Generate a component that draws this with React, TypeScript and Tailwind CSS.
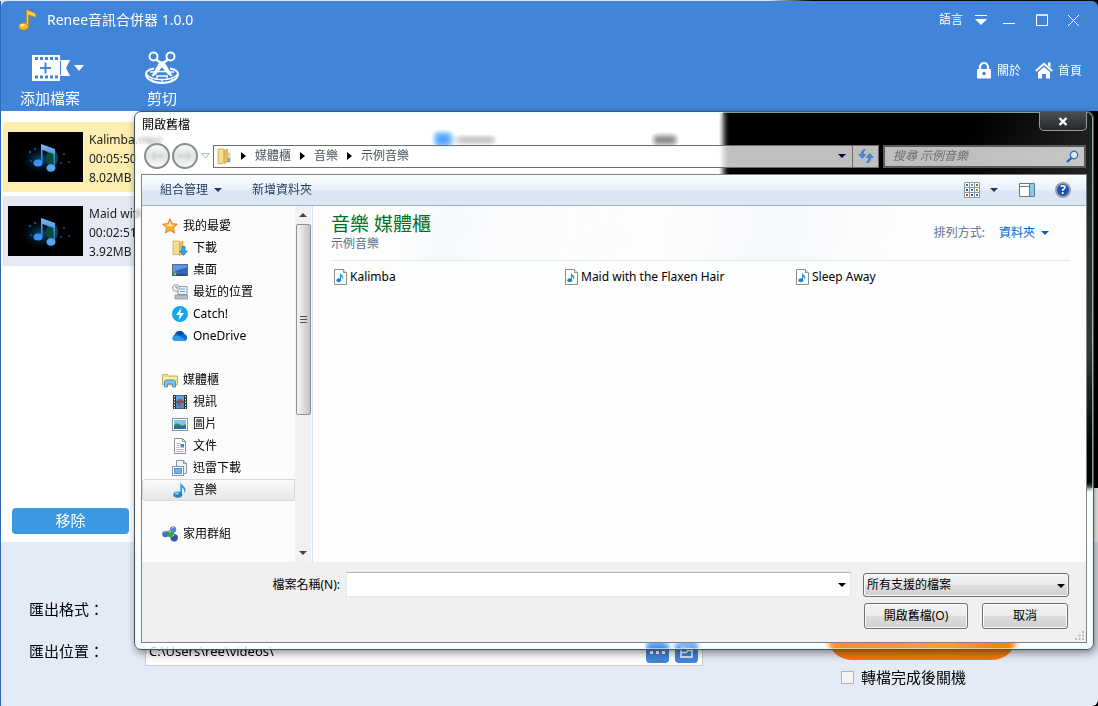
import React from 'react';

const APP_FONT = "font-['Noto_Sans','Noto_Sans_CJK_TC',sans-serif]";

/* ---------- small shared drawings ---------- */

const Caret: React.FC<{ className?: string }> = ({ className = '' }) => (
    <svg viewBox="0 0 8 4" className={`w-2 h-1 flex-none ${className}`} fill="currentColor">
        <path d="M0 0h8L4 4z" />
    </svg>
);

const RightCaret: React.FC = () => (
    <svg viewBox="0 0 5 8" className="w-[5px] h-2 flex-none text-black" fill="currentColor">
        <path d="M0 0v8l5-4z" />
    </svg>
);

const Icon: React.FC<{ children: React.ReactNode }> = ({ children }) => (
    <svg viewBox="0 0 16 16" className="w-4 h-4 flex-none">{children}</svg>
);

const StarIcon = () => (
    <Icon>
        <path d="M8 .8l2.1 4.9 5.3.5-4 3.5 1.2 5.3L8 12.3 3.4 15l1.2-5.3-4-3.5 5.3-.5z" fill="#ffb62e" stroke="#d9741a" strokeWidth=".9" />
        <path d="M8 3l1.3 3.6 3 .5L8 8.6 3.6 7l3-.4z" fill="#ffe9a0" />
    </Icon>
);

const DownloadsIcon = () => (
    <Icon>
        <path d="M1 1h6.500v13.500H1z" fill="#f3dc8c" stroke="#c9a545" strokeWidth=".7" />
        <path d="M7.500 2.500L11 1v13l-3.500 1.500z" fill="#e3c363" stroke="#c9a545" strokeWidth=".7" />
        <path d="M10 6.5h3V11h2.4l-3.9 4.5L7.7 11H10z" fill="#35a7ee" stroke="#1767ab" strokeWidth=".7" />
    </Icon>
);

const DesktopIcon = () => (
    <Icon>
        <rect x=".5" y="2.5" width="15" height="11" fill="#2f62c4" stroke="#5b6a80" />
        <path d="M1 3h14v3C9 6 5 8 1 11z" fill="#5e96e6" />
        <path d="M1 12h14v2H1z" fill="#3a4a60" />
        <circle cx="3" cy="12" r="1.4" fill="#6ed066" />
    </Icon>
);

const RecentIcon = () => (
    <Icon>
        <path d="M6 2.5h9v8H6z" fill="#eef4fa" stroke="#8a98a8" />
        <path d="M8 5h5M8 7.5h5" stroke="#5ba7dd" />
        <path d="M3 11h12.5v4H3z" fill="#b5bcc4" stroke="#8b939b" strokeWidth=".8" />
        <circle cx="4" cy="4" r="3.4" fill="#f3f6f8" stroke="#8d99a6" />
        <path d="M4 2v2h2" fill="none" stroke="#5c6b7a" strokeWidth=".8" />
    </Icon>
);

const CatchIcon = () => (
    <Icon>
        <circle cx="8" cy="8" r="8" fill="#15a6ee" />
        <path d="M9.4 1.8L4 9h3.6l-1 5.2L12 7H8.4z" fill="#fff" />
    </Icon>
);

const OneDriveIcon = () => (
    <Icon>
        <path d="M3.5 13A3.3 3.3 0 013 6.6 5 5 0 0112.3 6 3.6 3.6 0 0112.5 13z" fill="#0f6cc9" />
        <path d="M0 10.6C1 7.5 5 6.8 7 8l7 4.3c-.6.5-1.2.7-2 .7H3.3A3.2 3.2 0 010 10.6z" fill="#2b9df0" />
        <path d="M12.3 6A5 5 0 003 6.6C5 6 6 6.5 8 8z" fill="#0a4fa3" />
    </Icon>
);

const LibraryIcon = () => (
    <Icon>
        <path d="M.5 2.5h5l1 1.5h9v9H.5z" fill="#f4dc88" stroke="#c5a143" strokeWidth=".8" />
        <path d="M1 5.5h14v1.5H1z" fill="#fdf3c5" />
        <path d="M2.5 15V9.5l2-1.5h7l2 1.5V15h-3v-3h-5v3z" fill="#7cc2ea" stroke="#3a86bb" strokeWidth=".8" />
    </Icon>
);

const VideoIcon = () => (
    <Icon>
        <rect x="1" y="1" width="14" height="14" fill="#2a3238" />
        <rect x="4" y="1.5" width="8" height="6" fill="#58a9e4" />
        <rect x="4" y="8.5" width="8" height="6" fill="#4a8fd6" />
        <path d="M5 6l3-1.500 3 1.500v1.500H5z" fill="#a8543a" />
        <path d="M5 10l2.500-1 2 2-2 1.500z" fill="#a8543a" />
        <path d="M2.5 2v13M13.5 2v13" stroke="#fff" strokeDasharray="1.4 1.4" />
    </Icon>
);

const PictureIcon = () => (
    <Icon>
        <rect x=".5" y="2.5" width="15" height="12" fill="#fff" stroke="#8b9199" />
        <rect x="2" y="4" width="12" height="9" fill="#7fc6f2" />
        <path d="M2 9c3-3 5-1 7 0s3 0 5-1v2H2z" fill="#3f8a52" />
        <path d="M2 10h12v3H2z" fill="#256fb0" />
    </Icon>
);

const DocumentIcon = () => (
    <Icon>
        <path d="M2.5.5h8l3 3v12h-11z" fill="#fff" stroke="#8b9199" />
        <path d="M10.5.5v3h3" fill="none" stroke="#8b9199" />
        <path d="M4.5 5.5h4M4.5 7.5h3M4.5 9.5h3M4.5 11.5h7M4.5 13.5h7" stroke="#98a2ad" strokeWidth=".8" />
        <rect x="8.5" y="6" width="3.5" height="3.5" fill="#3f85d0" />
    </Icon>
);

const XunleiIcon = () => (
    <Icon>
        <path d="M4.5.5h7l3 3v10h-10z" fill="#eef3f8" stroke="#8c97a5" />
        <path d="M11.5.5v3h3" fill="none" stroke="#8c97a5" />
        <rect x=".5" y="6.5" width="11" height="9" fill="#fff" stroke="#7b98b8" />
        <rect x="2.5" y="8.5" width="7" height="5" fill="#6db2f2" stroke="#3f80c4" strokeWidth=".8" />
    </Icon>
);

const MusicIcon = () => (
    <Icon>
        <path d="M8.3 0c.4 3 4.9 4 5.2 7.5.1 1.4-.4 2.6-1.3 3.5.5-3-1.2-4.7-2.200-5.4v7.400H8.3z" fill="#2c9fe2" />
        <ellipse cx="5.800" cy="12.6" rx="4.5" ry="3.2" fill="#1b83cf" />
        <ellipse cx="4.9" cy="11.4" rx="2.2" ry="1.2" fill="#7fd0f7" />
    </Icon>
);

const HomeGroupIcon = () => (
    <Icon>
        <circle cx="3.5" cy="8" r="3.3" fill="#4371c6" />
        <circle cx="11" cy="3.5" r="3.2" fill="#5a86d8" />
        <circle cx="12.2" cy="11.8" r="3.7" fill="#2d56b0" />
        <circle cx="8.5" cy="7.8" r="3.5" fill="#39a33b" />
        <path d="M1.8 6.500a2 2 0 012-1M9.5 2.3a2 2 0 012-.8M10.3 10.2a2.5 2.5 0 012-1M7 6.200a2.3 2.3 0 012-.7" fill="none" stroke="#dff0ff" strokeWidth=".9" />
    </Icon>
);

const AudioFileIcon = () => (
    <Icon>
        <path d="M1.5.5h9l3 3v12h-12z" fill="#fff" stroke="#8d8d8d" />
        <path d="M10.5.5v3h3" fill="#eee" stroke="#8d8d8d" />
        <path d="M7 3.5c.3 2 3.4 2.6 3.4 5 0 .9-.3 1.6-.9 2.2.2-1.8-.7-2.6-1.5-3v3.4H7z" fill="#2a97dd" />
        <ellipse cx="5.8" cy="11.3" rx="2.4" ry="2" fill="#1b83cf" />
    </Icon>
);

const FolderIcon = () => (
    <Icon>
        <path d="M2 1h6v13l-1 1.5H2z" fill="#f4dd8e" stroke="#cfa947" strokeWidth=".8" />
        <path d="M8 2.5L11.5 1v13L8 15.5z" fill="#e2bf5c" stroke="#cfa947" strokeWidth=".8" />
        <path d="M11.5 5h2.5v9h-2.5z" fill="#f3dd97" stroke="#cfa947" strokeWidth=".6" />
        <path d="M12 10h1.5v4H12z" fill="#4b9be0" />
    </Icon>
);

/* ---------- main window ---------- */

const Thumbnail: React.FC = () => (
    <svg viewBox="0 0 75 50" className="w-[75px] h-[50px] flex-none bg-black">
        <defs>
            <radialGradient id="glow">
                <stop offset="0" stopColor="#0d4f8a" />
                <stop offset="1" stopColor="#000" stopOpacity="0" />
            </radialGradient>
            <linearGradient id="note" x1="0" y1="0" x2="0" y2="1">
                <stop offset="0" stopColor="#7cbcf4" />
                <stop offset="1" stopColor="#1463c4" />
            </linearGradient>
        </defs>
        <ellipse cx="33" cy="28" rx="24" ry="16" fill="url(#glow)" />
        <ellipse cx="44" cy="26" rx="6" ry="9" fill="#0b4a3c" />
        <path d="M33 12l14 5v19h-1.500V22L34.500 18v13H33z" fill="url(#note)" />
        <ellipse cx="30" cy="31" rx="4.500" ry="3.500" fill="#3a8ff0" />
        <ellipse cx="43" cy="36" rx="4.500" ry="3.800" fill="#5aa5ee" />
        <g fill="#174f94">
            <circle cx="22" cy="20" r="1.2" />
            <circle cx="27" cy="17" r="1.2" />
            <circle cx="23" cy="29" r="1" />
            <circle cx="56" cy="22" r="1" />
            <circle cx="61" cy="30" r="1" />
            <circle cx="53" cy="31" r="1" />
        </g>
    </svg>
);

const tracks = [
    { name: 'Kalimba.mp3', time: '00:05:50', size: '8.02MB', active: true },
    { name: 'Maid with the', time: '00:02:51', size: '3.92MB', active: false },
];

const Header: React.FC = () => (
    <header className="h-[110px] flex flex-col justify-between bg-[#4185da] text-white rounded-t-md pb-[3px]">
        <div className="flex items-center justify-between h-[38px] pl-4 pr-[18px]">
            <div className="flex items-center gap-2 text-sm">
                <svg viewBox="0 0 22 24" className="w-[22px] h-6">
                    <path d="M9.500 1.500c3 2 9 2.500 9.500 5.500.1 1-.2 1.800-.6 2.500-1.900-1.500-5-1.800-7-2.700V18H9.500z" fill="#ffd03c" stroke="#c98412" strokeWidth=".7" />
                    <ellipse cx="6.500" cy="18.500" rx="4.800" ry="3.600" fill="#ffb91f" stroke="#c98412" strokeWidth=".7" />
                    <ellipse cx="5.500" cy="17.300" rx="2.300" ry="1.200" fill="#fff0b0" />
                </svg>
                <h1>Renee音訊合併器 1.0.0</h1>
            </div>
            <div className="flex items-center text-xs">
                <button className="flex items-center gap-3">
                    語言
                    <svg viewBox="0 0 12 10" className="w-3 h-[10px]" fill="currentColor">
                        <path d="M0 0h12v1H0zM0 4h12l-6 6z" />
                    </svg>
                </button>
                <button aria-label="最小化" className="ml-4">
                    <svg viewBox="0 0 13 13" className="w-[13px] h-[13px]"><path d="M0 9.500h12" stroke="#fff" /></svg>
                </button>
                <button aria-label="最大化" className="ml-5">
                    <svg viewBox="0 0 13 13" className="w-[13px] h-[13px]"><path d="M.5 1h11v10.500H.5zM0 1h12" fill="none" stroke="#fff" /></svg>
                </button>
                <button aria-label="關閉視窗" className="ml-[18px]">
                    <svg viewBox="0 0 13 13" className="w-[13px] h-[13px]"><path d="M1 1l11 11M12 1L1 12" stroke="#fff" /></svg>
                </button>
            </div>
        </div>

        <div className="flex items-start justify-between pl-[19px] pr-4">
            <div className="flex gap-[60px] text-[15px]">
                <button className="flex flex-col items-start gap-[2px]">
                    <span className="flex items-center gap-1 h-9 pl-3">
                        <svg viewBox="0 0 38 28" className="w-[38px] h-7">
                            <path d="M0 1h28v5h10l-4 8 4 8H28v5H0z" fill="#fff" />
                            <path d="M3 4.500h23M3 23h23" stroke="#4185da" strokeWidth="3" strokeDasharray="3 2" />
                            <path d="M8 14h11M13.500 8.500v11" stroke="#4185da" strokeWidth="2" />
                            <path d="M28.500 7v14" stroke="#4185da" />
                        </svg>
                        <svg viewBox="0 0 10 6" className="w-[10px] h-[6px]" fill="#fff"><path d="M0 0h10L5 6z" /></svg>
                    </span>
                    <span className="leading-5">添加檔案</span>
                </button>
                <button className="flex flex-col items-center gap-[2px]">
                    <svg viewBox="0 0 36 36" className="w-9 h-9" fill="none" stroke="#fff">
                        <path d="M10 18.500C5 19.500 2 21.500 2 24c0 5 7 9 16 9s16-4 16-9c0-2.500-3-4.500-8-5.500" strokeWidth="2" />
                        <path d="M2 24c3 4 9 5.500 16 5.500S31 28 34 24M6 22h4M26 22h4M14 21.500h8M12 26h12M13 26v3M23 26v3M18 29v3M8 28v3M28 28v3" strokeWidth="1.300" />
                        <circle cx="9.500" cy="6.500" r="4" strokeWidth="2" />
                        <circle cx="26.500" cy="6.500" r="4" strokeWidth="2" />
                        <path d="M12 9.500l7 5M24 9.500l-7 5" strokeWidth="2.500" />
                        <path d="M16 12L8 26l3.500-1.500 6.500-8 6.500 8L28 26l-8-14z" fill="#fff" strokeWidth="1" />
                    </svg>
                    <span className="leading-5">剪切</span>
                </button>
            </div>
            <nav className="flex gap-[14px] text-xs pt-3">
                <a href="#about" className="flex items-center gap-[6px]">
                    <svg viewBox="0 0 14 17" className="w-[14px] h-[17px]">
                        <path d="M3 8V5a4 4 0 018 0v3" fill="none" stroke="#fff" strokeWidth="2.200" />
                        <rect y="7" width="14" height="9.500" rx="1" fill="#fff" />
                        <circle cx="7" cy="11.500" r="1.700" fill="#4185da" />
                    </svg>
                    關於
                </a>
                <a href="#home" className="flex items-center gap-[5px]">
                    <svg viewBox="0 0 18 17" className="w-[18px] h-[17px]">
                        <path d="M.8 9L9 1.800 17.200 9" fill="none" stroke="#fff" strokeWidth="2" />
                        <path d="M13 .5h2.500v5L13 3.500zM3 10l6-5 6 5v6.500h-4V12H7v4.500H3z" fill="#fff" />
                    </svg>
                    首頁
                </a>
            </nav>
        </div>
    </header>
);

const TrackList: React.FC = () => (
    <aside className="w-[135px] flex-none flex flex-col justify-between pt-[11px] pb-2">
        <ul className="flex flex-col gap-1 pl-[2px]">
            {tracks.map((t) => (
                <li
                    key={t.name}
                    className={`flex items-center gap-[6px] h-[70px] pl-[5px] text-xs leading-[19px] whitespace-nowrap ${t.active ? 'bg-[#fbeeb0]' : 'bg-[#e4e9f4]'}`}
                >
                    <Thumbnail />
                    <div className="pt-[2px] text-[#1c1c1c]">
                        <p>{t.name}</p>
                        <p>{t.time}</p>
                        <p>{t.size}</p>
                    </div>
                </li>
            ))}
        </ul>
        <button className="ml-[11px] mr-[7px] h-[26px] rounded bg-[#3b99e4] text-white text-[15px] leading-5 pb-[2px]">移除</button>
    </aside>
);

const Workspace: React.FC = () => (
    <div className="flex h-[431px] bg-white">
        <TrackList />
        <div className="flex-1 pt-[21px] pl-[298px] pr-[46px]">
            <div className="flex items-center">
                <span className="w-[18px] h-[15px] bg-[#4a94f0]" />
                <span className="w-10 h-2 ml-1 bg-neutral-400" />
                <span className="w-6 h-[10px] ml-auto bg-neutral-500" />
            </div>
            <div className="w-[72px] h-2 ml-1 mt-2 bg-neutral-200" />
        </div>
        <div className="w-[375px] h-[377px] bg-black" />
    </div>
);

const ExportPanel: React.FC = () => (
    <div className="flex justify-between h-[164px] bg-[#e4eaf6] rounded-b-md text-[15px] text-black">
        <div className="flex-none pl-7 pt-[46px]">
            <div className="flex items-center h-[42px]">匯出格式：</div>
            <div className="flex items-center h-[42px]">
                <label htmlFor="out-dir" className="w-[116px]">匯出位置：</label>
                <div className="flex items-center w-[558px] h-7 mt-[2px] bg-white border border-[#ccc] pr-1 gap-[6px]">
                    <input id="out-dir" defaultValue="C:\Users\ree\videos\" className="flex-1 min-w-0 pl-[3px] text-[13px] outline-none" />
                    <button aria-label="瀏覽" className="w-[23px] h-[22px] rounded bg-[#4185da] flex items-center justify-center">
                        <svg viewBox="0 0 15 3" className="w-[15px] h-[3px]" fill="#fff">
                            <path d="M0 0h3v3H0zM6 0h3v3H6zM12 0h3v3h-3z" />
                        </svg>
                    </button>
                    <button aria-label="開啟資料夾" className="w-[23px] h-[22px] rounded bg-[#4185da] flex items-center justify-center">
                        <svg viewBox="0 0 13 12" className="w-[13px] h-3" fill="none" stroke="#fff" strokeWidth="1.500">
                            <path d="M1 11V1h4l1 1.500h6V11zM1 6.500h5L8 4.500h4" />
                        </svg>
                    </button>
                </div>
            </div>
        </div>
        <div className="w-[271px] flex-none pt-[68px]">
            <button aria-label="開始" className="block w-[190px] h-[50px] rounded-full bg-[#f57900]" />
            <label className="flex items-center gap-[7px] mt-[7px] pl-[14px] leading-5">
                <input type="checkbox" className="appearance-none w-[13px] h-[13px] bg-[#f4f4f4] border border-[#b4b4b4]" />
                轉檔完成後關機
            </label>
        </div>
    </div>
);

/* ---------- open-file dialog ---------- */

type Place = { label: string; icon: React.FC; root?: boolean; selected?: boolean };

const places: Place[][] = [
    [
        { label: '我的最愛', icon: StarIcon, root: true },
        { label: '下載', icon: DownloadsIcon },
        { label: '桌面', icon: DesktopIcon },
        { label: '最近的位置', icon: RecentIcon },
        { label: 'Catch!', icon: CatchIcon },
        { label: 'OneDrive', icon: OneDriveIcon },
    ],
    [
        { label: '媒體櫃', icon: LibraryIcon, root: true },
        { label: '視訊', icon: VideoIcon },
        { label: '圖片', icon: PictureIcon },
        { label: '文件', icon: DocumentIcon },
        { label: '迅雷下載', icon: XunleiIcon },
        { label: '音樂', icon: MusicIcon, selected: true },
    ],
    [{ label: '家用群組', icon: HomeGroupIcon, root: true }],
];

const files = ['Kalimba', 'Maid with the Flaxen Hair', 'Sleep Away'];
const crumbs = ['媒體櫃', '音樂', '示例音樂'];

const RoundButton: React.FC<{ label: string; d: string }> = ({ label, d }) => (
    <button aria-label={label} className="w-[26px] h-[26px] rounded-full border-2 border-[#888d90] bg-gradient-to-b from-[#f6f8f6] via-[#dfe3e2] to-[#f6f8f7] flex items-center justify-center">
        <svg viewBox="0 0 16 12" className="w-4 h-3"><path d={d} fill="#d3d8d6" stroke="#dfe3e1" /></svg>
    </button>
);

const AddressRow: React.FC = () => (
    <div className="flex items-center h-[26px] pl-[3px] pr-px">
        <div className="flex gap-[2px]">
            <RoundButton label="上一頁" d="M1 6l5-5v3h9v4H6v3z" />
            <RoundButton label="下一頁" d="M15 6l-5-5v3H1v4h9v3z" />
        </div>
        <svg viewBox="0 0 9 6" className="w-[9px] h-[6px] mx-[3px]"><path d="M.7.5h7.600L4.500 5z" fill="#fff" stroke="#b5bab5" /></svg>
        <div className="flex-1 flex h-[23px] border border-[#6e6e6e] bg-white/75">
            <div className="flex-1 flex items-center pl-[2px] text-[#4b5560]">
                <FolderIcon />
                {crumbs.map((c) => (
                    <React.Fragment key={c}>
                        <span className="mx-[9px]"><RightCaret /></span>
                        <button>{c}</button>
                    </React.Fragment>
                ))}
            </div>
            <button aria-label="歷程記錄" className="w-5 flex items-center justify-center text-[#00004e]"><Caret /></button>
            <button aria-label="重新整理" className="w-[26px] border-l border-[#6e6e6e] flex items-center justify-center">
                <svg viewBox="0 0 16 14" className="w-4 h-[14px]" fill="#3c8fe0" stroke="#1c5cae" strokeWidth=".5">
                    <path d="M7.500.5C4.500.5 3.200 2.500 3.200 5.500H.7L4.200 9.500l3.500-4H5.200c0-2 .8-3.500 2.300-5z" />
                    <path d="M8.500 13.500c3 0 4.300-2 4.300-5h2.500l-3.500-4-3.500 4h2.500c0 2-.8 3.500-2.300 5z" />
                </svg>
            </button>
        </div>
        <div className="w-[203px] flex items-center h-[23px] ml-1 pl-2 pr-[5px] border-2 border-[#5a5a5a] bg-white/75">
            <input aria-label="搜尋" placeholder="搜尋 示例音樂" className="flex-1 min-w-0 italic outline-none placeholder:text-[#6d6d6d]" />
            <svg viewBox="0 0 13 13" className="w-[13px] h-[13px]">
                <path d="M6 7.500L1 12" stroke="#2b5ea8" strokeWidth="2.200" />
                <circle cx="8" cy="5" r="3.700" fill="#dcecfa" stroke="#2f74c0" strokeWidth="1.400" />
            </svg>
        </div>
    </div>
);

const Toolbar: React.FC = () => (
    <div className="flex items-center justify-between h-[31px] pl-[18px] pr-[15px] border-b border-[#a0afc3] bg-[linear-gradient(#fbfdff,#e9f1fa_48%,#dce6f4_52%,#dbe7f5)] text-[#1e395b]">
        <div className="flex gap-[30px]">
            <button className="flex items-center gap-[6px]">組合管理<Caret /></button>
            <button>新增資料夾</button>
        </div>
        <div className="flex items-center">
            <button aria-label="變更檢視" className="flex items-center gap-[10px]">
                <svg viewBox="0 0 16 16" className="w-4 h-4">
                    <path d="M.5.5h15v15H.5zM5.500.5v15M10.500.5v15M.5 5.500h15M.5 10.500h15" fill="#fff" stroke="#8e9aaa" />
                    <path d="M2 3h2M12 13h2M7 8h2" stroke="#2a8a9a" strokeWidth="2" />
                    <path d="M2 8h2M7 13h2" stroke="#2c4f9c" strokeWidth="2" />
                    <path d="M7 3h2M12 8h2" stroke="#73a52e" strokeWidth="2" />
                    <path d="M12 3h2M2 13h2" stroke="#b4552c" strokeWidth="2" />
                </svg>
                <Caret />
            </button>
            <button aria-label="預覽窗格" className="ml-[21px]">
                <svg viewBox="0 0 16 14" className="w-4 h-[14px]">
                    <path d="M.5.5h15v13H.5z" fill="#fff" stroke="#66788e" />
                    <path d="M1 3.500h9" stroke="#66788e" />
                    <path d="M10 1h5v12h-5z" fill="#8ccbe8" />
                    <path d="M10.500 1v12" stroke="#66788e" />
                </svg>
            </button>
            <button aria-label="說明" className="ml-5 w-4 h-4 rounded-full border-2 border-[#9a9fa8] bg-[#2350b4] text-white text-xs font-bold leading-3">?</button>
        </div>
    </div>
);

const NavPane: React.FC = () => (
    <div className="w-[171px] flex-none flex bg-[#fcfcfc] border-r border-[#d6e5f5]">
        <div className="flex-1 flex flex-col gap-[22px] pt-[9px] pb-[17px] text-black">
            {places.map((group) => (
                <ul key={group[0].label}>
                    {group.map(({ label, icon: PlaceIcon, root, selected }) => (
                        <li
                            key={label}
                            className={`flex items-center h-[22px] gap-[5px] ${root ? 'pl-5' : 'pl-[30px]'} ${selected ? 'rounded-l bg-gradient-to-b from-[#fafafa] to-[#e5e5e5] shadow-[inset_0_0_0_1px_#d9d9d9]' : ''}`}
                        >
                            <PlaceIcon />
                            <span>{label}</span>
                        </li>
                    ))}
                </ul>
            ))}
        </div>
        <div className="w-4 mr-px flex flex-col items-center bg-[#f1f1f1]">
            <span className="h-[18px] flex items-center"><Caret className="rotate-180 text-[#444]" /></span>
            <div className="w-[15px] h-[191px] flex items-center justify-center rounded-[2px] border border-[#8f8f8f] bg-gradient-to-r from-[#f6f6f6] to-[#c4c4c4]">
                <svg viewBox="0 0 7 8" className="w-[7px] h-2"><path d="M0 .5h7M0 3.500h7M0 6.500h7" stroke="#555" /></svg>
            </div>
            <span className="mt-auto h-[18px] flex items-center"><Caret className="text-[#444]" /></span>
        </div>
    </div>
);

const FilePane: React.FC = () => (
    <div className="flex-1 bg-[#fdfdfd] bg-[linear-gradient(100deg,#fdfdfd_12%,#f4f8fc_18%,#fbfcfe_24%,#fdfdfd_45%,#f5f8fc_60%,#fdfdfd_75%)] bg-[length:100%_54px] bg-no-repeat pl-[18px] pr-4">
        <div className="flex justify-between h-[55px] pt-[5px] border-b border-[#dbe7f3]">
            <div>
                <h2 className="text-[19px] leading-[26px] text-[#006f1e]">音樂 媒體櫃</h2>
                <p className="leading-[14px] text-[#5c6f86]">示例音樂</p>
            </div>
            <div className="flex items-center gap-[14px] pr-[21px] pb-[6px] text-[#5c6f86]">
                <span>排列方式:</span>
                <button className="flex items-center gap-[6px] text-[#0066cc]">資料夾<Caret /></button>
            </div>
        </div>
        <ul className="grid grid-cols-[repeat(auto-fill,231px)] pt-[5px] text-black">
            {files.map((f) => (
                <li key={f} className="flex items-center h-[22px] pl-[2px] gap-px">
                    <AudioFileIcon />
                    <span>{f}</span>
                </li>
            ))}
        </ul>
    </div>
);

const DIALOG_BUTTON = 'h-[26px] rounded-[3px] border border-[#707070] bg-[linear-gradient(#f3f3f3,#ebebeb_48%,#dddddd_52%,#cfcfcf)] shadow-[inset_0_0_0_1px_#fbfbfb]';

const DialogFooter: React.FC = () => (
    <div className="relative h-20 pt-[10px] pl-4 pr-[17px] bg-[#f0f0f0] text-black">
        <div className="flex items-center h-[25px]">
            <label htmlFor="file-name" className="flex-none w-[188px] pr-[6px] text-right">檔案名稱(N):</label>
            <div className="flex-1 flex items-center h-[25px] bg-white border border-[#e3e9ef] border-t-[#abadb3] pr-1">
                <input id="file-name" className="flex-1 min-w-0 px-1 outline-none" />
                <button aria-label="檔案名稱清單"><Caret /></button>
            </div>
            <div className="relative w-[206px] h-6 ml-3">
                <select aria-label="檔案類型" className={`${DIALOG_BUTTON} appearance-none block w-full max-h-full pl-[3px] outline-none`}>
                    <option>所有支援的檔案</option>
                </select>
                <Caret className="absolute right-1 top-[11px] pointer-events-none" />
            </div>
        </div>
        <div className="flex justify-end gap-[14px] pt-[6px] pr-px">
            <button className={`${DIALOG_BUTTON} w-[104px]`}>開啟舊檔(O)</button>
            <button className={`${DIALOG_BUTTON} w-[86px]`}>取消</button>
        </div>
        <svg viewBox="0 0 9 9" className="absolute right-[2px] bottom-[2px] w-[9px] h-[9px]" fill="#bdbdbd">
            <path d="M7 0h2v2H7zM7 3.500h2v2H7zM7 7h2v2H7zM3.500 3.500h2v2h-2zM3.500 7h2v2h-2zM0 7h2v2H0z" />
        </svg>
    </div>
);

const OpenDialog: React.FC = () => (
    <section
        role="dialog"
        aria-label="開啟舊檔"
        className="absolute left-[134px] right-1 top-[111px] px-[6px] pb-[6px] text-xs rounded-[7px] border border-[#4a5560] bg-[linear-gradient(115deg,transparent_70%,rgba(255,255,255,0.22)_88%,transparent_92%)] backdrop-blur-[3px] backdrop-brightness-110 shadow-[inset_0_0_0_1px_rgba(215,255,255,0.6),2px_3px_8px_rgba(0,0,0,0.45)]"
    >
        <div className="flex items-start justify-between h-[31px]">
            <h2 className="pl-px pt-1 leading-[18px] text-black">開啟舊檔</h2>
            <button aria-label="關閉" className="w-12 h-[19px] flex items-center justify-center rounded-b-[5px] border border-t-0 border-[#9a9a9a] bg-gradient-to-b from-[#4b4f54] to-[#26282b]">
                <svg viewBox="0 0 10 9" className="w-[10px] h-[9px]"><path d="M1.500 1l7 7M8.500 1l-7 7" stroke="#fff" strokeWidth="2.400" /></svg>
            </button>
        </div>
        <AddressRow />
        <div className="mt-[5px] border border-[#7b8288]">
            <Toolbar />
            <div className="flex">
                <NavPane />
                <FilePane />
            </div>
            <DialogFooter />
        </div>
    </section>
);

export default function App() {
    return (
        <div className={`relative min-h-screen pt-px overflow-hidden bg-[linear-gradient(90deg,#dde5ee_70%,#000_74%)] ${APP_FONT}`}>
            <main className="border-l border-[#2f68b5]">
                <Header />
                <Workspace />
                <ExportPanel />
            </main>
            <OpenDialog />
        </div>
    );
}
